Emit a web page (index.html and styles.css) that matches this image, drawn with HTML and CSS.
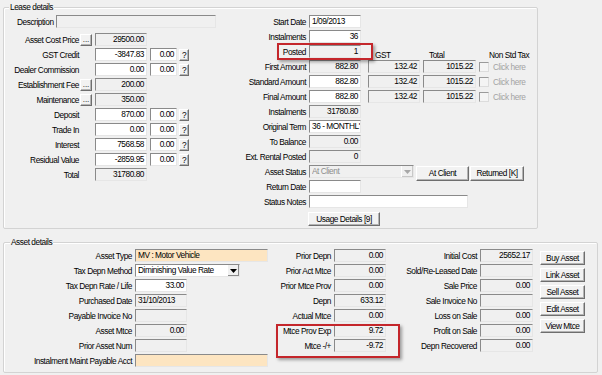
FILE: index.html
```html
<!DOCTYPE html>
<html lang="en">

<head>
    <meta charset="UTF-8">
    <title>Lease and Asset Details</title>
    <link rel="stylesheet" href="styles.css">
</head>

<body>

    <!-- Lease details -->
    <div class="group lease">
        <span class="legend">Lease details</span>
        <div class="group-body">

            <!-- Amounts column -->
            <div class="amounts">
                <div class="desc-row">
                    <span>Description</span>
                    <span class="fld ro w160"></span>
                </div>
                <div class="amount-rows">
                    <div class="row"><span class="lbl">Asset Cost Price</span><span class="slot"><button class="dots">...</button></span><span class="fld ro num w52">29500.00</span></div>
                    <div class="row"><span class="lbl">GST Credit</span><span class="slot"></span><span class="fld num w52">-3847.83</span><span class="fld num small">0.00</span><button class="q">?</button></div>
                    <div class="row"><span class="lbl">Dealer Commission</span><span class="slot"></span><span class="fld num w52">0.00</span><span class="fld num small">0.00</span><button class="q">?</button></div>
                    <div class="row"><span class="lbl">Establishment Fee</span><span class="slot"><button class="dots">...</button></span><span class="fld ro num w52">200.00</span></div>
                    <div class="row"><span class="lbl">Maintenance</span><span class="slot"><button class="dots">...</button></span><span class="fld ro num w52">350.00</span></div>
                    <div class="row"><span class="lbl">Deposit</span><span class="slot"></span><span class="fld num w52">870.00</span><span class="fld num small">0.00</span><button class="q">?</button></div>
                    <div class="row"><span class="lbl">Trade In</span><span class="slot"></span><span class="fld num w52">0.00</span><span class="fld num small">0.00</span><button class="q">?</button></div>
                    <div class="row"><span class="lbl">Interest</span><span class="slot"></span><span class="fld num w52">7568.58</span><span class="fld num small">0.00</span><button class="q">?</button></div>
                    <div class="row"><span class="lbl">Residual Value</span><span class="slot"></span><span class="fld num w52">-2859.95</span><span class="fld num small">0.00</span><button class="q">?</button></div>
                    <div class="row"><span class="lbl">Total</span><span class="slot"></span><span class="fld ro num w52">31780.80</span></div>
                </div>
            </div>

            <!-- Terms column -->
            <div class="terms">
                <div class="row"><span class="tlbl">Start Date</span><span class="fld w52">1/09/2013</span></div>
                <div class="row"><span class="tlbl">Instalments</span><span class="fld num w52">36</span></div>
                <div class="row">
                    <span class="tlbl">Posted</span><span class="fld ro num w52">1</span>
                    <span class="hd hd-gst">GST</span>
                    <span class="hd hd-total">Total</span>
                    <span class="hd hd-tax">Non Std Tax</span>
                </div>
                <div class="row"><span class="tlbl">First Amount</span><span class="fld ro num w52">882.80</span><span class="fld ro num gst">132.42</span><span class="fld ro num total">1015.22</span><span class="check"></span><span class="click">Click here</span></div>
                <div class="row"><span class="tlbl">Standard Amount</span><span class="fld num w52">882.80</span><span class="fld ro num gst">132.42</span><span class="fld ro num total">1015.22</span><span class="check"></span><span class="click">Click here</span></div>
                <div class="row"><span class="tlbl">Final Amount</span><span class="fld num w52">882.80</span><span class="fld ro num gst">132.42</span><span class="fld ro num total">1015.22</span><span class="check"></span><span class="click">Click here</span></div>
                <div class="row"><span class="tlbl">Instalments</span><span class="fld ro num w52">31780.80</span></div>
                <div class="row"><span class="tlbl">Original Term</span><span class="fld w52">36 - MONTHL'</span></div>
                <div class="row"><span class="tlbl">To Balance</span><span class="fld ro num w52">0.00</span></div>
                <div class="row"><span class="tlbl">Ext. Rental Posted</span><span class="fld ro num w52">0</span></div>
                <div class="row">
                    <span class="tlbl">Asset Status</span>
                    <span class="fld ro combo status-combo"><span class="combo-text off">At Client</span><span class="arrow off"><svg width="7" height="4" viewBox="0 0 7 4"><path d="M0 0h7L3.5 4z" fill="#a8a8a8"/></svg></span></span>
                    <button class="btn at-client">At Client</button>
                    <button class="btn returned">Returned [K]</button>
                </div>
                <div class="row"><span class="tlbl">Return Date</span><span class="fld w52"></span></div>
                <div class="row"><span class="tlbl">Status Notes</span><span class="fld notes"></span></div>
                <div class="row"><span class="tlbl"></span><button class="btn usage">Usage Details [9]</button></div>
            </div>
        </div>
        <div class="callout posted-callout"></div>
    </div>

    <!-- Asset details -->
    <div class="group asset">
        <span class="legend">Asset details</span>
        <div class="group-body asset-body">

            <div class="asset-main">
                <div class="row"><span class="albl">Asset Type</span><span class="fld peach wide">MV : Motor Vehicle</span></div>
                <div class="row">
                    <span class="albl">Tax Depn Method</span>
                    <span class="fld combo depn-combo"><span class="combo-text">Diminishing Value Rate</span><span class="arrow"><svg width="7" height="4" viewBox="0 0 7 4"><path d="M0 0h7L3.5 4z" fill="#000"/></svg></span></span>
                </div>
                <div class="row"><span class="albl">Tax Depn Rate / Life</span><span class="fld num w52">33.00</span></div>
                <div class="row"><span class="albl">Purchased Date</span><span class="fld ro w52">31/10/2013</span></div>
                <div class="row"><span class="albl">Payable Invoice No</span><span class="fld ro w52"></span></div>
                <div class="row"><span class="albl">Asset Mtce</span><span class="fld ro num w52">0.00</span></div>
                <div class="row"><span class="albl">Prior Asset Num</span><span class="fld ro w52"></span></div>
                <div class="row"><span class="albl">Instalment Maint Payable Acct</span><span class="fld peach wide"></span></div>
            </div>

            <div class="asset-mid">
                <div class="row"><span class="mlbl">Prior Depn</span><span class="fld ro num w52">0.00</span></div>
                <div class="row"><span class="mlbl">Prior Act Mtce</span><span class="fld ro num w52">0.00</span></div>
                <div class="row"><span class="mlbl">Prior Mtce Prov</span><span class="fld ro num w52">0.00</span></div>
                <div class="row"><span class="mlbl">Depn</span><span class="fld ro num w52">633.12</span></div>
                <div class="row"><span class="mlbl">Actual Mtce</span><span class="fld ro num w52">0.00</span></div>
                <div class="row"><span class="mlbl">Mtce Prov Exp</span><span class="fld ro num w52">9.72</span></div>
                <div class="row"><span class="mlbl">Mtce -/+</span><span class="fld ro num w52">-9.72</span></div>
            </div>

            <div class="asset-sale">
                <div class="row"><span class="slbl">Initial Cost</span><span class="fld ro num w53">25652.17</span></div>
                <div class="row"><span class="slbl">Sold/Re-Leased Date</span><span class="fld ro w53"></span></div>
                <div class="row"><span class="slbl">Sale Price</span><span class="fld ro num w53">0.00</span></div>
                <div class="row"><span class="slbl">Sale Invoice No</span><span class="fld ro w53"></span></div>
                <div class="row"><span class="slbl">Loss on Sale</span><span class="fld ro num w53">0.00</span></div>
                <div class="row"><span class="slbl">Profit on Sale</span><span class="fld ro num w53">0.00</span></div>
                <div class="row"><span class="slbl">Depn Recovered</span><span class="fld ro num w53">0.00</span></div>
            </div>

            <div class="asset-actions">
                <button class="btn act">Buy Asset</button>
                <button class="btn act">Link Asset</button>
                <button class="btn act">Sell Asset</button>
                <button class="btn act">Edit Asset</button>
                <button class="btn act">View Mtce</button>
            </div>
        </div>
        <div class="callout mtce-callout"></div>
    </div>

</body>

</html>
```

FILE: styles.css
```css
body {
    margin: 0;
    width: 602px;
    height: 375px;
    overflow: hidden;
    background-color: #f0f0f0;
    font-family: "Liberation Sans", Arial, sans-serif;
    font-size: 8.3px;
    letter-spacing: -0.45px;
    color: #000;
}

/* Group boxes */
.group {
    position: relative;
    box-sizing: border-box;
    margin-left: 3px;
    border: 1px solid #d3d3d3;
    border-radius: 2px;
    box-shadow: inset 1px 1px 0 #fff;
}

.lease {
    margin-top: 7px;
    width: 535px;
    height: 222px;
}

.asset {
    margin-top: 13px;
    width: 595px;
    height: 131px;
}

.legend {
    position: absolute;
    top: -6px;
    left: 5px;
    padding: 0 1px;
    line-height: 11px;
    background-color: #f0f0f0;
}

.asset .legend {
    left: 6px;
}

.group-body {
    display: flex;
}

.row {
    display: flex;
    align-items: center;
    height: 15px;
    white-space: nowrap;
}

/* Fields */
.fld {
    box-sizing: border-box;
    display: block;
    flex: none;
    height: 13px;
    line-height: 11px;
    padding: 0 2px;
    overflow: hidden;
    white-space: nowrap;
    background-color: #fff;
    border: 1px solid;
    border-color: #8a8a8a #e6e6e6 #e6e6e6 #8a8a8a;
}

.fld.ro {
    background-color: #f0f0f0;
}

.fld.peach {
    background-color: #fde5c1;
}

.num {
    text-align: right;
}

.w52 { width: 52px; }
.w53 { width: 53px; }
.w160 { width: 160px; }

/* Buttons */
button {
    font: inherit;
    letter-spacing: inherit;
    color: #000;
    padding: 0;
    margin: 0;
    background-color: #f2f2f2;
    border: 1px solid;
    border-color: #fff #6e6e6e #6e6e6e #fff;
    box-shadow: inset -1px -1px 0 #b4b4b4;
    line-height: 10px;
    white-space: nowrap;
    cursor: pointer;
}

.dots {
    width: 12px;
    height: 12px;
    margin-left: 1px;
    font-size: 8px;
    letter-spacing: 0;
    line-height: 6px;
}

.q {
    width: 10px;
    height: 12px;
    margin-left: 2px;
}

.btn {
    height: 15px;
    flex: none;
}

/* Lease: amounts column */
.amounts {
    width: 186px;
    flex: none;
    padding-top: 7px;
}

.desc-row {
    display: flex;
    align-items: center;
    gap: 2px;
    height: 13px;
    padding-left: 13px;
}

.amount-rows {
    margin-top: 4px;
}

.lbl {
    width: 75px;
    flex: none;
    text-align: right;
}

.slot {
    width: 16px;
    flex: none;
    display: flex;
}

.small {
    width: 27px;
    margin-left: 3px;
}

/* Lease: terms column */
.terms {
    padding-top: 6px;
}

.tlbl {
    width: 116px;
    flex: none;
    text-align: right;
}

.terms .tlbl + .fld {
    margin-left: 3px;
}

.hd {
    box-sizing: border-box;
    height: 15px;
    padding-top: 7px;
    line-height: 9px;
    flex: none;
}

.hd-gst {
    width: 52px;
    margin-left: 7px;
    padding-left: 7px;
}

.hd-total {
    width: 53px;
    margin-left: 3px;
    padding-left: 6px;
}

.hd-tax {
    margin-left: 3px;
    padding-left: 10px;
}

.gst {
    width: 52px;
    margin-left: 7px;
}

.total {
    width: 53px;
    margin-left: 3px;
}

.check {
    box-sizing: border-box;
    width: 10px;
    height: 10px;
    margin-left: 3px;
    background-color: #f4f4f4;
    border: 1px solid;
    border-color: #9a9a9a #dcdcdc #dcdcdc #9a9a9a;
}

.click {
    margin-left: 4px;
    color: #a3a3a3;
}

.combo {
    display: flex;
    align-items: stretch;
    padding-right: 0;
}

.combo-text {
    flex: 1;
    overflow: hidden;
}

.combo-text.off {
    color: #8c8c8c;
}

.arrow {
    width: 11px;
    display: flex;
    align-items: center;
    justify-content: center;
    background-color: #f0f0f0;
    border-left: 1px solid #fff;
    box-shadow: inset -1px -1px 0 #8a8a8a;
}

.arrow.off {
    box-shadow: inset -1px -1px 0 #c8c8c8;
}

.status-combo {
    width: 105px;
}

.at-client {
    width: 53px;
    margin-left: 2px;
    margin-top: 3px;
}

.returned {
    width: 54px;
    margin-left: 1px;
    margin-top: 3px;
}

.notes {
    width: 159px;
}

.usage {
    width: 72px;
    height: 14px;
    margin-left: 2px;
    margin-top: 4px;
}

/* Asset details */
.asset-body {
    padding-top: 5px;
}

.asset-main {
    width: 268px;
    flex: none;
}

.albl {
    width: 128px;
    flex: none;
    text-align: right;
}

.albl + .fld,
.mlbl + .fld,
.slbl + .fld {
    margin-left: 3px;
}

.wide {
    width: 133px;
}

.depn-combo {
    width: 105px;
}

.asset-mid {
    width: 114px;
    flex: none;
}

.mlbl {
    width: 59px;
    flex: none;
    text-align: right;
}

.asset-sale {
    width: 147px;
    flex: none;
}

.slbl {
    width: 91px;
    flex: none;
    text-align: right;
}

.asset-actions {
    display: flex;
    flex-direction: column;
    gap: 3px;
    margin-left: 7px;
    padding-top: 3px;
}

.act {
    width: 45px;
    height: 14px;
}

/* Red highlight boxes */
.callout {
    position: absolute;
    box-sizing: border-box;
    border: 2px solid #c4262b;
    box-shadow: 2px 2px 3px rgba(0, 0, 0, 0.35);
}

.posted-callout {
    left: 273px;
    top: 35px;
    width: 96px;
    height: 17px;
}

.mtce-callout {
    left: 272px;
    top: 81px;
    width: 124px;
    height: 34px;
}
```
